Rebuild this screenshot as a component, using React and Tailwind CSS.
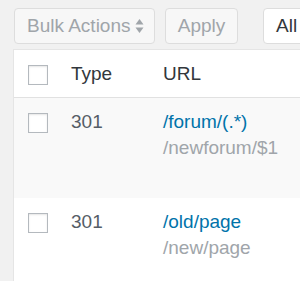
import React from 'react';

const rows = [
  { code: '301', source: '/forum/(.*)', target: '/newforum/$1' },
  { code: '301', source: '/old/page', target: '/new/page' },
];

const Checkbox = () => (
  <span className="block w-[20px] h-[20px] shrink-0 border border-[#b4b9be] bg-white shadow-[inset_0_1px_2px_rgba(0,0,0,0.1)]" />
);

const App = () => {
  return (
    <div
      className="w-[300px] h-[281px] overflow-hidden bg-[#f1f1f1] text-[19px] text-[#32373c]"
      style={{ fontFamily: '"Liberation Sans", Arial, sans-serif' }}
    >
      {/* Toolbar */}
      <div className="flex items-center pt-[8px] pl-[14px] h-[49px] items-start">
        <div className="flex items-center justify-between w-[141px] h-[36px] shrink-0 pl-[12px] pr-[10px] bg-[#f7f7f7] border border-[#dddddd] rounded-[4px] text-[#a0a5aa]">
          <span>Bulk Actions</span>
          <svg width="9" height="16" viewBox="0 0 9 16" className="shrink-0">
            <path d="M4.5 1 L8.5 6.5 H0.5 Z" fill="#a0a5aa" />
            <path d="M4.5 15 L8.5 9.5 H0.5 Z" fill="#a0a5aa" />
          </svg>
        </div>
        <div className="flex items-center justify-center ml-[10px] w-[73px] h-[36px] shrink-0 bg-[#f7f7f7] border border-[#dddddd] rounded-[4px] text-[#a0a5aa]">
          Apply
        </div>
        <div className="flex items-center ml-[25px] w-[120px] h-[36px] shrink-0 pl-[12px] bg-white border border-[#dddddd] rounded-[4px]">
          All
        </div>
      </div>

      {/* Table */}
      <div className="ml-[13px] w-[400px] bg-white border border-[#e5e5e5]">
        <div className="flex items-start h-[48px] pt-[11px] border-b border-[#e1e1e1]">
          <div className="w-[57px] pl-[14px] pt-[4px]">
            <Checkbox />
          </div>
          <div className="w-[92px] leading-[26px]">Type</div>
          <div className="leading-[26px]">URL</div>
        </div>
        {rows.map((row, i) => (
          <div
            key={row.source}
            className={`flex items-start h-[100px] pt-[11px] ${i % 2 === 0 ? 'bg-[#f9f9f9]' : 'bg-white'}`}
          >
            <div className="w-[57px] pl-[14px] pt-[4px]">
              <Checkbox />
            </div>
            <div className="w-[92px] leading-[26px] text-[#555d66]">{row.code}</div>
            <div className="leading-[26px]">
              <div className="text-[#0073aa]">{row.source}</div>
              <div className="text-[#a0a5aa]">{row.target}</div>
            </div>
          </div>
        ))}
      </div>
    </div>
  );
};

export default App;
